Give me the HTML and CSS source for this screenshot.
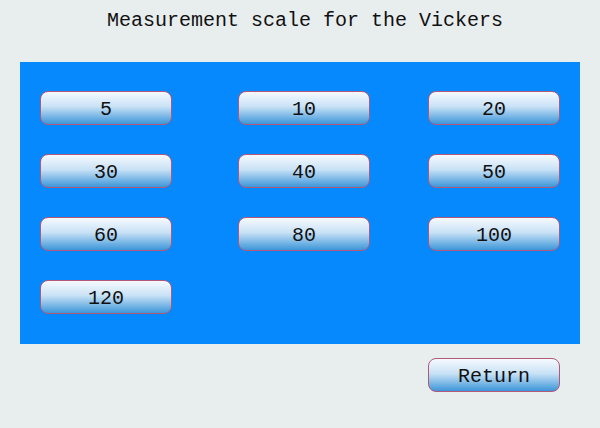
FILE: index.html
```html
<!DOCTYPE html>
<html lang="en">
<head>
    <meta charset="UTF-8">
    <title>Vickers Scale</title>
    <link rel="stylesheet" href="styles.css">
</head>
<body>
    <h2 class="title">Measurement scale for the Vickers</h2>
    <div class="panel">
        <button class="scale-btn">5</button>
        <button class="scale-btn">10</button>
        <button class="scale-btn">20</button>
        <button class="scale-btn">30</button>
        <button class="scale-btn">40</button>
        <button class="scale-btn">50</button>
        <button class="scale-btn">60</button>
        <button class="scale-btn">80</button>
        <button class="scale-btn">100</button>
        <button class="scale-btn">120</button>
    </div>
    <div class="footer">
        <button class="scale-btn">Return</button>
    </div>
</body>
</html>
```

FILE: styles.css
```css
body {
    margin: 0;
    width: 600px;
    height: 428px;
    background: #e8edee;
    font-family: "Liberation Mono", "DejaVu Sans Mono", monospace;
    overflow: hidden;
}
.title {
    margin: 0;
    height: 62px;
    padding: 9px 0 0 10px;
    box-sizing: border-box;
    text-align: center;
    font-size: 20px;
    font-weight: normal;
    color: #111;
}
.panel {
    margin: 0 20px;
    height: 282px;
    box-sizing: border-box;
    background: #0689fd;
    padding: 29px 0 0 20px;
    display: grid;
    grid-template-columns: 198px 190px 132px;
    grid-auto-rows: 34px;
    row-gap: 29px;
}
.scale-btn {
    width: 132px;
    height: 34px;
    border: 1px solid #b4587a;
    border-radius: 8px;
    background: linear-gradient(to bottom, #f6fafe 0%, #c9e2f6 45%, #3d96d9 100%);
    font-family: "Liberation Mono", "DejaVu Sans Mono", monospace;
    font-size: 20px;
    color: #111;
    padding: 3px 0 0 0;
    cursor: pointer;
}
.footer {
    display: flex;
    justify-content: flex-end;
    padding: 14px 40px 0 0;
}
```
